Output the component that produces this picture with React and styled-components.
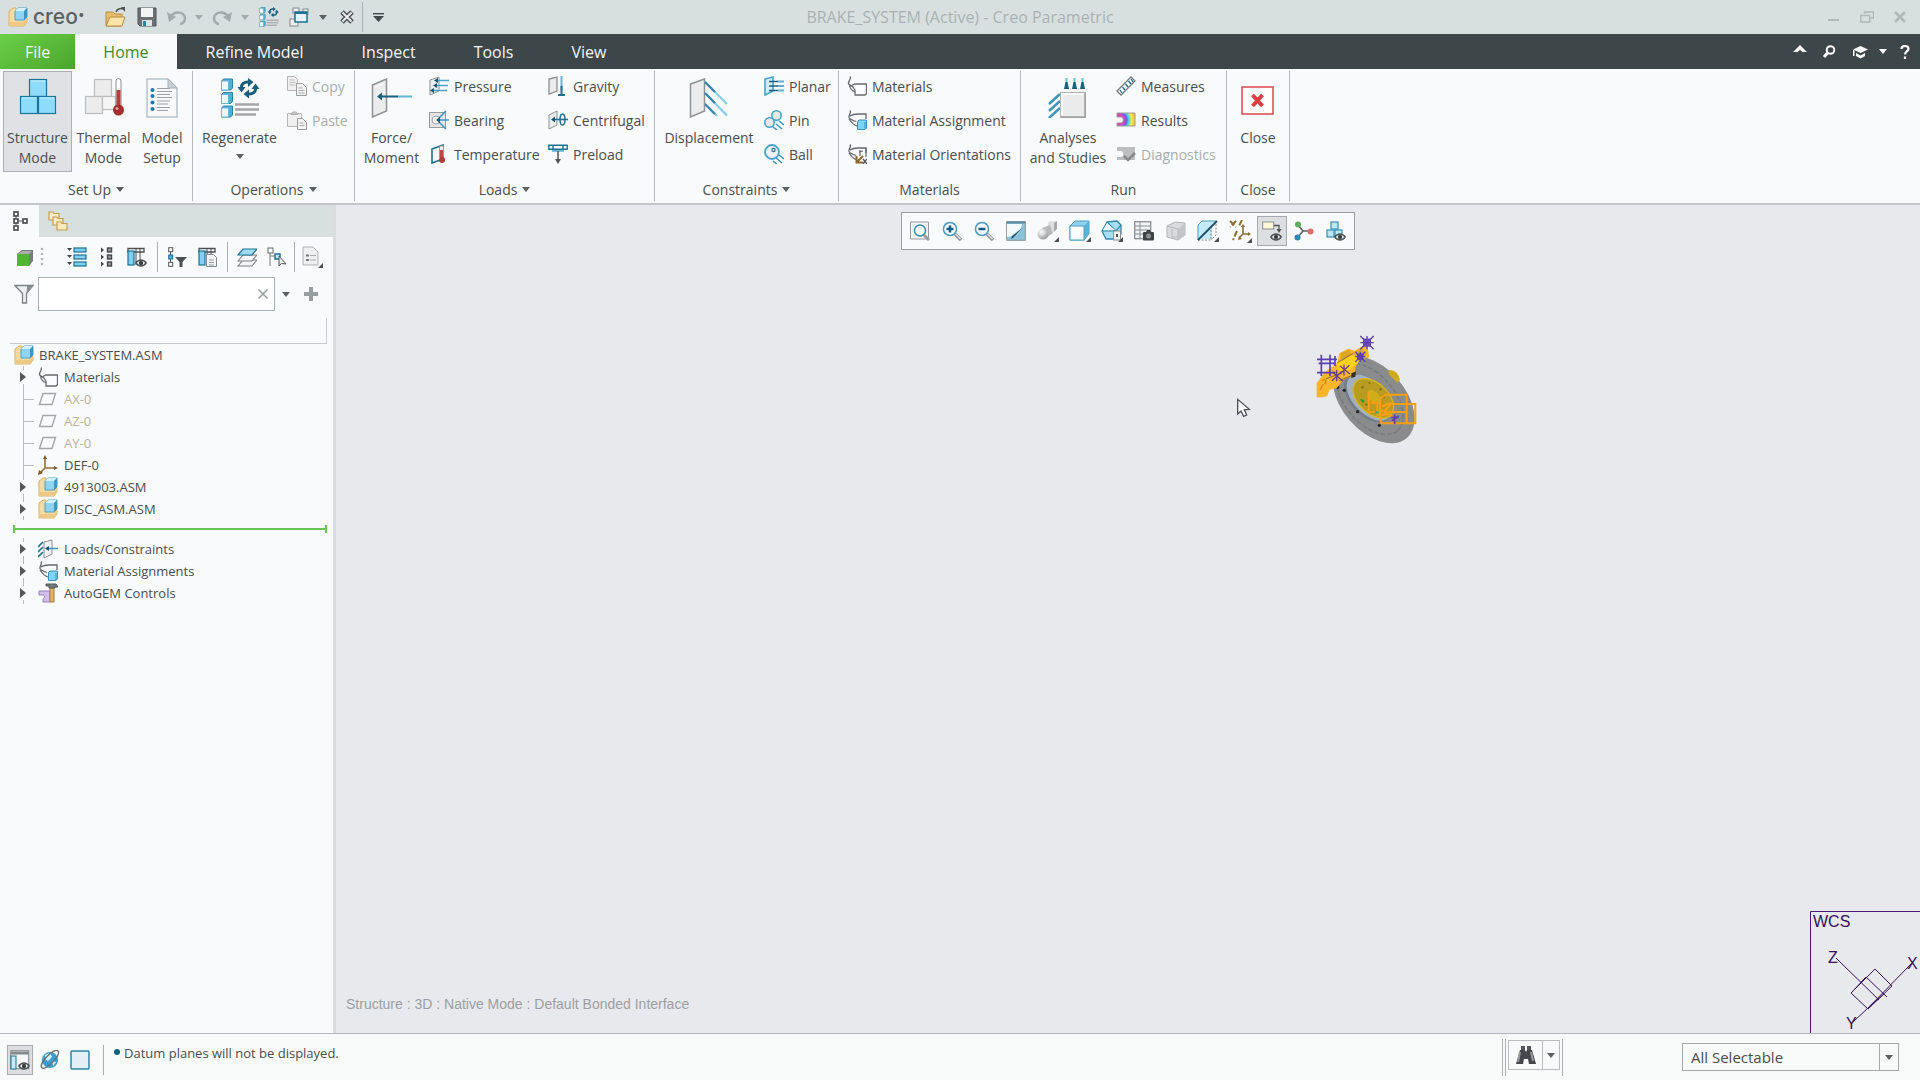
import React from 'react';
import styled, { createGlobalStyle, css } from 'styled-components';

const Global = createGlobalStyle`
  *, *::before, *::after { box-sizing: border-box; }
  html, body, #root { height: 100%; margin: 0; }
  body {
    font-family: "Open Sans", "Noto Sans", sans-serif;
    font-size: 14px;
    color: #4a4e50;
    background: #f8fafb;
    overflow: hidden;
  }
  button, input, select { font: inherit; color: inherit; }
`;

const bare = css`
  border: 0;
  padding: 0;
  margin: 0;
  background: none;
`;

/* ---------- frame ---------- */
const Shell = styled.div`
  display: flex;
  flex-direction: column;
  height: 100vh;
`;

const TitleBar = styled.header`
  display: grid;
  grid-template-columns: 1fr auto 1fr;
  align-items: center;
  height: 34px;
  flex: none;
  background: #d8e0df;
`;

const Title = styled.h1`
  margin: 0;
  font-size: 16px;
  font-weight: 400;
  color: #a9b2b2;
`;

const QuickBar = styled.div`
  display: flex;
  align-items: center;
  padding-left: 8px;
`;

const Brand = styled.span`
  display: flex;
  align-items: center;
  gap: 5px;
  width: 92px;
  font: 500 21px/24px Inter, sans-serif;
  color: #5a6062;
`;

const Mark = styled.sup`
  font-size: 5px;
  line-height: 8px;
  margin-left: -4px;
  align-self: flex-start;
  padding-top: 6px;
`;

const QuickButton = styled.button`
  ${bare}
  display: flex;
  align-items: center;
  justify-content: center;
  width: ${(p) => p.$w || 30}px;
  height: 30px;
`;

const Rule = styled.span`
  width: 1px;
  height: ${(p) => p.$h || 30}px;
  margin: 0 ${(p) => p.$m || 0}px ${(p) => p.$lift || 0}px;
  background: #a9afb2;
`;

const WindowButtons = styled.div`
  display: flex;
  justify-content: flex-end;
  padding-right: 4px;
`;

const WindowButton = styled(QuickButton)`
  width: 33px;
`;

/* ---------- tabs ---------- */
const TabBar = styled.nav`
  display: flex;
  flex: none;
  height: 35px;
  background: #3d4648;
`;

const Tab = styled.button`
  ${bare}
  padding: 0 29px;
  font-size: 16px;
  color: #f3f6f6;
  ${(p) => p.$kind === 'file' && css`
    padding: 0 25px;
    background: linear-gradient(150deg, #6bd048, #4aa52c);
  `}
  ${(p) => p.$kind === 'active' && css`
    padding: 0 28px;
    color: #3f8a2c;
    background: #f8fafb;
  `}
`;

const TabTools = styled.div`
  display: flex;
  align-items: center;
  margin-left: auto;
`;

/* ---------- ribbon ---------- */
const Ribbon = styled.section`
  display: flex;
  flex: none;
  height: 136px;
  padding: 2px 0 2px;
  background: #f8fafc;
  border-bottom: 2px solid #c3c7ca;
`;

const Group = styled.div`
  display: flex;
  flex-direction: column;
  width: ${(p) => p.$w}px;
  flex: none;
  border-right: 1px solid #b6bbbe;
`;

const GroupBody = styled.div`
  display: flex;
  gap: ${(p) => p.$gap ?? 5}px;
  height: 101px;
  padding-left: ${(p) => p.$pad || 4}px;
`;

const GroupName = styled.div`
  display: flex;
  justify-content: center;
  align-items: center;
  gap: 5px;
  flex: 1;
  padding-top: 5px;
`;

const BigButton = styled.button`
  ${bare}
  display: flex;
  flex-direction: column;
  align-items: center;
  width: ${(p) => p.$w}px;
  flex: none;
  padding-top: 6px;
  line-height: 20px;
  border: 1px solid ${(p) => (p.$on ? '#adb0b3' : 'transparent')};
  background: ${(p) => (p.$on ? '#dfe1e4' : 'none')};
  white-space: pre-line;
  svg:first-child { margin-bottom: 10px; }
`;

const SmallList = styled.div`
  display: flex;
  flex-direction: column;
  gap: 4px;
  width: ${(p) => (p.$w ? p.$w + 'px' : 'auto')};
  margin-right: ${(p) => (p.$w ? -5 : 0)}px;
`;

const SmallButton = styled.button`
  ${bare}
  display: flex;
  align-items: center;
  gap: 5px;
  height: 30px;
  white-space: nowrap;
  color: ${(p) => (p.disabled ? '#a9adaf' : 'inherit')};
`;

/* ---------- workspace ---------- */
const Work = styled.main`
  display: flex;
  flex: 1;
  min-height: 0;
`;

const Side = styled.aside`
  width: 336px;
  flex: none;
  border-right: 3px solid #d9dde0;
  background: #f8fafb;
`;

const SideTabs = styled.div`
  display: flex;
  height: 32px;
  background: #d8dfdf;
`;

const SideTab = styled.button`
  ${bare}
  display: flex;
  align-items: center;
  justify-content: center;
  width: 39px;
  padding-left: ${(p) => (p.$on ? 3 : 0)}px;
  background: ${(p) => (p.$on ? '#f8fafb' : 'none')};
`;

const SideTools = styled.div`
  display: flex;
  align-items: center;
  height: 40px;
  padding-left: 10px;
`;

const Grip = styled.span`
  display: flex;
  width: 22px;
`;

const FilterRow = styled.div`
  display: flex;
  align-items: center;
  height: 34px;
  padding-left: 14px;
  gap: 4px;
`;

const FilterBox = styled.div`
  display: flex;
  align-items: center;
  width: 237px;
  height: 34px;
  background: #fff;
  border: 1px solid #a7b3b7;
`;

const FilterInput = styled.input`
  ${bare}
  flex: 1;
  min-width: 0;
  height: 30px;
  padding: 0 6px;
  outline: 0;
`;

const TreeHead = styled.div`
  height: 26px;
  margin: 7px 6px 0 10px;
  border: solid #c6cacd;
  border-width: 0 1px 1px 0;
`;

const Tree = styled.ul`
  margin: 0;
  padding: 0;
  list-style: none;
  font-size: 13px;
`;

const TreeRow = styled.li`
  display: flex;
  align-items: center;
  height: 22px;
  gap: ${(p) => (p.$root ? 5 : 6)}px;
  padding-left: ${(p) => (p.$root ? 14 : 0)}px;
  color: ${(p) => (p.$muted ? '#bcb39d' : 'inherit')};
`;

const Toggle = styled.button`
  ${bare}
  display: flex;
  width: 38px;
  height: 22px;
  margin-right: -6px;
`;

const Insert = styled.div`
  height: 18px;
  margin: 0 6px 0 13px;
  display: flex;
  align-items: center;
  &::before, &::after {
    content: "";
    width: 2px;
    height: 8px;
    background: #6ac259;
  }
`;

const InsertLine = styled.span`
  flex: 1;
  height: 2px;
  background: #6ac259;
`;

const Canvas = styled.section`
  position: relative;
  flex: 1;
  display: flex;
  flex-direction: column;
  align-items: center;
  padding: 7px 0 0;
  background: #e8e9ed;
`;

const ViewBar = styled.div`
  display: flex;
  align-items: center;
  height: 38px;
  padding: 0 3px;
  gap: 2px;
  border: 1px solid #999ea3;
  background: #f8fafc;
`;

const ViewButton = styled.button`
  ${bare}
  display: flex;
  align-items: center;
  justify-content: center;
  width: 30px;
  height: 30px;
  border: 1px solid ${(p) => (p.$on ? '#a5a9ad' : 'transparent')};
  background: ${(p) => (p.$on ? '#dcdee1' : 'none')};
`;

const Placed = styled.svg`
  position: absolute;
  left: ${(p) => (p.$x == null ? 'auto' : p.$x + 'px')};
  right: ${(p) => (p.$x == null ? 0 : 'auto')};
  top: ${(p) => (p.$y == null ? 'auto' : p.$y + 'px')};
  bottom: ${(p) => (p.$y == null ? 0 : 'auto')};
`;

const ModelNote = styled.p`
  align-self: flex-start;
  margin: auto 0 19px 10px;
  font: 14px/20px "Liberation Sans", sans-serif;
  color: #9c9ea2;
`;

/* ---------- status bar ---------- */
const Status = styled.footer`
  display: flex;
  align-items: center;
  height: 47px;
  flex: none;
  padding: 6px 21px 0 7px;
  border-top: 1px solid #b2b7ba;
  background: #f8fafa;
`;

const StatusButton = styled.button`
  ${bare}
  display: flex;
  align-items: center;
  justify-content: center;
  width: ${(p) => (p.$on ? 26 : 30)}px;
  height: 30px;
  margin-right: ${(p) => (p.$on ? 2 : 0)}px;
  border: 1px solid ${(p) => (p.$on ? '#a9adb0' : 'transparent')};
  background: ${(p) => (p.$on ? '#dcdee1' : 'none')};
`;

const Message = styled.p`
  display: flex;
  gap: 4px;
  flex: 1;
  margin: 0 0 15px 2px;
  font-size: 13px;
  line-height: 18px;
  &::before {
    content: "";
    width: 6px;
    height: 6px;
    margin-top: 5px;
    border-radius: 50%;
    background: #14607f;
  }
`;

const FindBox = styled.div`
  display: flex;
  height: 30px;
  border: 1px solid #b9bdc0;
  margin: 0 2px 10px;
`;

const FindButton = styled(QuickButton)`
  height: 28px;
  border-left: ${(p) => (p.$split ? '1px solid #b9bdc0' : 0)};
`;

const Picker = styled.label`
  display: flex;
  align-items: center;
  width: 217px;
  height: 28px;
  margin-left: 119px;
  margin-bottom: 6px;
  border: 1px solid #a5a9ac;
`;

const PickerSelect = styled.select`
  ${bare}
  appearance: none;
  flex: 1;
  height: 26px;
  padding-left: 8px;
  font-size: 15px;
  outline: 0;
`;

const PickerArrow = styled.span`
  display: flex;
  align-items: center;
  justify-content: center;
  width: 19px;
  height: 26px;
  border-left: 1px solid #a5a9ac;
  pointer-events: none;
`;

/* ---------- drawings ---------- */
const I = ({ s = 20, h, v, children }) => (
  <svg width={s} height={h || s} viewBox={v || `0 0 ${s} ${h || s}`} fill="none" aria-hidden="true">{children}</svg>
);
const Arrow = ({ c = '#5b6063', w = 8 }) => (
  <I s={w} h={5} v="0 0 8 5"><path d="M0 0h8L4 5z" fill={c} /></I>
);

const Asm = () => (
  <I s={20}>
    <path d="M1 4l4-3h3v10h11v4l-3 4H1z" fill="#f6dba0" stroke="#d9b368" />
    <path d="M1 19h15l3-4v-4h-3v4H1z" fill="#eec985" />
    <path d="M7 4l3-3h9v9l-3 3H7z" fill="#8fd4f5" stroke="#4b9fc8" />
    <path d="M7 4l3-3h9l-3 3z" fill="#d3f0fd" /><path d="M16 4l3-3v9l-3 3z" fill="#3d97c4" />
  </I>
);
const cube = (x, y, w, f = '#8ddcfb', st = '#1c739c') => (
  <g key={`${x}-${y}`}><rect x={x} y={y} width={w} height={w} fill={f} stroke={st} strokeWidth="1.2" /></g>
);
const Structure = () => (
  <I s={40}>{cube(11.5, 1.5, 17)}{cube(2.5, 18.5, 17)}{cube(20.5, 18.5, 17)}
    <path d="M13 3h14M4 20h14M22 20h14" stroke="#c3effd" /></I>
);
const Thermal = () => (
  <I s={40}>
    {cube(10.5, 1.5, 17, '#ececec', '#bdbdbd')}{cube(1.5, 18.5, 17, '#ececec', '#bdbdbd')}{cube(18.5, 18.5, 13, '#f5f5f5', '#bdbdbd')}
    <rect x="32" y=".5" width="5" height="30" rx="2.5" fill="#fff" stroke="#8d8d8d" />
    <path d="M34.500 12v18" stroke="#b5403a" strokeWidth="4" /><circle cx="34.500" cy="32" r="5.500" fill="#a12f2b" /><circle cx="33" cy="30.500" r="1.500" fill="#e0a09c" />
  </I>
);
const Setup = () => (
  <I s={32} h={40}>
    <path d="M1 1h21l9 9v29H1z" fill="#f6f8fa" stroke="#b7c4cc" strokeWidth="1.500" /><path d="M22 1v9h9z" fill="#c9d0d5" stroke="#aab4ba" />
    {[12, 18, 24.5, 31].map((y) => <g key={y}><circle cx="6.500" cy={y} r="2" fill="#1f7ba3" /><path d={`M11 ${y - 1.5}h13M11 ${y + 1.5}h${y > 20 ? 11 : 15}`} stroke="#9aa0a4" /></g>)}
  </I>
);
const RefreshArrows = ({ t }) => (
  <g transform={t}>
    <path d="M3.500 8C3 4 6 1.500 11 2" stroke="#1a5f7e" strokeWidth="3" /><path d="M10-2l5.500 4L10 7z" fill="#1a5f7e" /><path d="M-.5 7h8l-4 5.500z" fill="#1a5f7e" />
    <path d="M17.500 8c.5 4-2.500 6.500-7.500 6" stroke="#1a5f7e" strokeWidth="3" /><path d="M11 18.500L5.500 14 11 9.500z" fill="#1a5f7e" /><path d="M13.500 9h8l-4-5.500z" fill="#1a5f7e" />
  </g>
);
const miniCube = (x, y, w) => (
  <g key={y}><path d={`M${x} ${y + 2}l2-2h${w}v${w}l-2 2H${x}z`} fill="#4fb0d8" stroke="#2b85ab" /><rect x={x} y={y + 2} width={w - 2} height={w} fill="#edf8fd" stroke="#69b7d6" /></g>
);
const Regen = ({ s = 40 }) => (
  <I s={s} v="0 0 40 40">
    {[1, 14.5, 28].map((y) => miniCube(1.5, y, 9))}
    <RefreshArrows t="translate(18 2)" />
    {[26, 31, 36].map((y, i) => <path key={y} d={`M15 ${y + 0.500}h${i === 2 ? 21 : 24}`} stroke="#a6a6a6" strokeWidth="2.500" />)}
  </I>
);
const Copy = () => (
  <I><path d="M.5.500h7l3 3v11H.500z" fill="#f0f0f0" stroke="#b5b5b5" /><path d="M2.500 4h5M2.500 6.500h6M2.500 9h6" stroke="#bbb" /><path d="M9.500 7.500h6l4 4v8h-10z" fill="#f4f4f4" stroke="#9c9c9c" /><path d="M11.500 12h4M11.500 14.500h6M11.500 17h6" stroke="#aaa" /></I>
);
const Paste = () => (
  <I><path d="M.5 3.500h14v13H.500z" fill="#f0f0f0" stroke="#b5b5b5" /><path d="M4 4.500C4 1 11 1 11 4.500z" fill="#c9c9c9" stroke="#aaa" /><path d="M10.500 8.500h5l4 4v7h-9z" fill="#f4f4f4" stroke="#9c9c9c" /><path d="M12.500 13h4M12.500 15.500h5" stroke="#aaa" /></I>
);
const Force = () => (
  <I s={42} h={40}><path d="M1.500 7l14-6v32l-14 6z" fill="#ececec" stroke="#8f9294" strokeWidth="1.500" /><path d="M4 9l9-4" stroke="#fff" />
    <path d="M9 18.500h18" stroke="#19617f" strokeWidth="2" /><path d="M27 18.500h14" stroke="#5fb8dc" strokeWidth="2" /><path d="M6 18.500l5-4v8z" fill="#19617f" /></I>
);
const blue = '#1f7095';
const Pressure = () => (
  <I><path d="M1 4l9-3v14l-9 4z" fill="#ececec" stroke="#8d9193" /><path d="M8 4.500h12M6 9.500h13M4 14.500h14" stroke="#4ba5cc" strokeWidth="1.500" /><path d="M5 4.500l4-2.500v5zM4 9.500l4-2.500v5zM1 14.500l4-2.500v5z" fill="#155775" /></I>
);
const Bearing = () => (
  <I><rect x=".5" y="2.500" width="16" height="15" fill="#e4e4e4" stroke="#999da0" /><circle cx="7" cy="10" r="4" fill="#fff" stroke="#a4a4a4" /><path d="M9 10h11M10 8l7-7M10 12l7 7" stroke="#3b9ac4" strokeWidth="1.600" /><path d="M7 10l4-3v6z" fill="#155775" /></I>
);
const Temperature = () => (
  <I><path d="M3 5l11-4v14L3 19z" fill="#f6f8f9" stroke="#1f6d90" strokeWidth="1.600" /><rect x="10.500" y="2" width="4" height="12" rx="1" fill="#eee" stroke="#999" /><path d="M12.500 6v9" stroke="#c0463f" strokeWidth="3" /><circle cx="13" cy="16" r="3" fill="#b43a34" /></I>
);
const Gravity = () => (
  <I><path d="M1 3l8-2v14l-8 3z" fill="#ececec" stroke="#8d9193" strokeWidth="1.300" /><path d="M13.500 0v14" stroke="#63b9dd" strokeWidth="2" /><path d="M13.500 10v9M10 19h7" stroke={blue} strokeWidth="2" /></I>
);
const Centrifugal = () => (
  <I><path d="M1 5l8-4v14l-8 4z" fill="#ececec" stroke="#8d9193" /><path d="M5 9.500h15" stroke={blue} strokeWidth="1.600" /><ellipse cx="14.500" cy="9.500" rx="2.500" ry="5.500" stroke={blue} strokeWidth="1.500" /><path d="M3 9.500l4-3v6z" fill="#155775" /></I>
);
const Preload = () => (
  <I><path d="M.8 1.200h18.400v4H.8zM5 .8v5h10v-5" fill="#eef8fc" stroke={blue} strokeWidth="1.400" /><path d="M4 7h12" stroke="#58b0d6" strokeWidth="1.500" /><path d="M10 7v9" stroke="#555" strokeWidth="1.500" /><path d="M7 15h6l-3 5z" fill="#555" /></I>
);
const Displacement = () => (
  <I s={40}><path d="M1.500 6l14-5v32l-14 6z" fill="#ececec" stroke="#8f9294" strokeWidth="1.500" />
    {[[4, 38, 26], [15, 38, 37.5], [26, 28, 38]].map(([y, x2, y2]) => <g key={y}><path d={`M16 ${y}L${x2} ${y2}`} stroke="#86cdea" strokeWidth="2.200" /><path d={`M16 ${y}l10 10`} stroke="#3b86a8" strokeWidth="2.200" /></g>)}</I>
);
const Planar = () => (
  <I><path d="M1 3l8-2v14l-8 4z" fill="#cfeefa" stroke="#46a4ce" strokeWidth="1.600" /><path d="M5 5.500h15M5 10h15M5 14.500h15" stroke="#1c5f7e" strokeWidth="1.300" /><path d="M14 5.500h6M14 10h6M14 14.500h6" stroke="#63bbdf" strokeWidth="1.300" /></I>
);
const hatch = <path d="M9 17l4 3M12 14l6 5M15 11l5 4" stroke="#3a93bd" strokeWidth="1.500" />;
const Pin = () => (
  <I><circle cx="12.500" cy="5.500" r="4.700" fill="#e8e8e8" stroke="#45a5d0" strokeWidth="1.600" />{hatch}<circle cx="5.500" cy="12.500" r="4.700" fill="#e8e8e8" stroke="#45a5d0" strokeWidth="1.600" /></I>
);
const Ball = () => (
  <I>{hatch}<circle cx="8" cy="8" r="7" fill="#eef0f1" stroke="#45a5d0" strokeWidth="1.800" /><circle cx="9.500" cy="6" r="1.600" fill="#fff" stroke={blue} strokeWidth="1.200" /></I>
);
const Materials = () => (
  <I><path d="M3 .5c2 2.500-2 4-1.500 7 .5 2.500 3.500 2 5.500 4M2.500 8c0 5 3 7 6 8" stroke="#65696c" strokeWidth="1.300" /><path d="M5 9.500l2.500-1.500h12v9.500l-1.500 1.500H8v-5z" fill="#fbfcfd" stroke="#65696c" strokeWidth="1.300" strokeLinejoin="round" /></I>
);
const tagSmall = <path d="M3 .5c2 2-2 5-1 7s4 3 7 4M3 6c3-2 5-2 8-2h8v5M2 9c2 3 5 6 8 7" fill="none" stroke="#65696c" strokeWidth="1.300" />;
const MatAssign = () => (
  <I>{tagSmall}<path d="M10.500 11.500l1.500-1.500h7.500v8l-1.500 1.500h-7.500z" fill="#7fd3f6" stroke="#3b96bd" /><path d="M18 12v7" stroke="#3b96bd" /></I>
);
const MatOrient = () => (
  <I>{tagSmall}<path d="M19 4v9M12 8l4-1M13 6v6" stroke="#65696c" strokeWidth="1.200" /><path d="M10 18l6-6M9.500 12v6.500H16" stroke="#8a6a2c" strokeWidth="2" /><path d="M16 15l4 5M20 15l-4 5" stroke="#555" strokeWidth="1.400" /></I>
);
const Analyses = () => (
  <I s={40}>
    {[0, 8, 16].map((x) => <g key={x}><path d={`M${18.5 + x} 0v9`} stroke="#6fbfe0" strokeWidth="2" /><path d={`M${17.5 + x} 4h2l1.500 7h-5z`} fill="#19617f" /></g>)}
    {[[16, 26], [23, 33], [30, 40]].map(([a, b]) => <path key={a} d={`M12 ${a}L1 ${b}`} stroke="#3d95bd" strokeWidth="2.500" />)}
    <rect x="12.500" y="14.500" width="25" height="25" fill="#ebebeb" stroke="#b4b4b4" /><path d="M13 39h24V15" stroke="#9d9d9d" strokeWidth="1.500" /><path d="M14 37V16h21" stroke="#fff" strokeWidth="2" />
  </I>
);
const Measures = () => (
  <I><path d="M1 15L15 1l4 4L5 19z" fill="#f7f9fa" stroke="#777c7f" strokeWidth="1.300" /><path d="M6 17l-2-3M9 14l-2.500-3M12 11L9.500 8M15 8l-2.500-3M17 6l-2-3" stroke={blue} strokeWidth="1.300" /></I>
);
const Results = () => (
  <I h={16}><defs><radialGradient id="spectrum" gradientUnits="userSpaceOnUse" cx="3" cy="8" r="17"><stop offset=".1" stopColor="#d33" /><stop offset=".3" stopColor="#e541c4" /><stop offset=".45" stopColor="#6a5ce8" /><stop offset=".58" stopColor="#49d4f0" /><stop offset=".75" stopColor="#f2ee3c" /><stop offset="1" stopColor="#f7a43a" /></radialGradient></defs>
    <path d="M1 1h18v13H1v-3h4c3 0 3-6 0-6H1z" fill="url(#spectrum)" stroke="#a39a9a" /></I>
);
const Diagnostics = () => <I h={16}><path d="M1 1h18v13H1v-3h4c3 0 3-6 0-6H1z" fill="#bcbebf" /><path d="M8 10l4 4 7-7" stroke="#858789" strokeWidth="2.500" /></I>;
const CloseBox = () => (
  <I s={34} h={40}><rect x="1" y="9" width="31" height="27" fill="#fff" stroke="#d9484b" strokeWidth="1.500" /><path d="M11.500 17l10 11M21.500 17l-10 11" stroke="#dc3f42" strokeWidth="4" /></I>
);
const Eye = ({ x, y }) => (
  <g transform={`translate(${x} ${y})`}><path d="M0 4C3-1 9-1 12 4 9 9 3 9 0 4z" fill="#4b5053" /><path d="M2 4c2-3 6-3 8 0-2 3-6 3-8 0z" fill="#f4f6f6" /><circle cx="6" cy="4" r="2.200" fill="#3b4043" /></g>
);

const Open = () => (
  <I s={21}><path d="M1 19V5h7l2 2h7v12z" fill="#e7bd6c" stroke="#b98b3d" /><path d="M1 19l4-9h15l-3 9z" fill="#fbe3ac" stroke="#b98b3d" /><path d="M11 5c1-3 4-4 7-3" stroke="#4b5053" strokeWidth="1.500" /><path d="M16 0h4v5z" fill="#4b5053" /></I>
);
const Save = () => (
  <I><path d="M1 1h18v18H3l-2-2z" fill="#6c7073" stroke="#515558" /><rect x="4" y="1" width="12" height="9" fill="#f3f5f5" /><rect x="5" y="13" width="10" height="6" fill="#d9e3e8" /><rect x="6" y="14" width="3" height="5" fill="#2a7fa8" /></I>
);
const Undo = ({ flip }) => (
  <I><g transform={flip ? 'translate(20 0) scale(-1 1)' : undefined}><path d="M4 10c3-6 13-6 14 1 0 3-2 6-5 6" stroke="#a4abac" strokeWidth="2.500" /><path d="M0 5l2 10 7-5z" fill="#a4abac" /></g></I>
);
const Windows = () => (
  <I><rect x="1" y="12" width="8" height="7" fill="#eee" stroke="#858a8d" /><rect x="4" y="1" width="6" height="5" fill="#eee" stroke="#858a8d" /><rect x="14" y="2" width="5" height="5" fill="#eee" stroke="#858a8d" /><rect x="6" y="5" width="12" height="10" fill="#e6f2f8" stroke="#1f7095" strokeWidth="1.500" /><path d="M6 6h12" stroke="#1f7095" strokeWidth="2" /></I>
);
const CloseX = () => <I s={14}><path d="M2 2l10 10M12 2L2 12" stroke="#4d5254" strokeWidth="5" /><path d="M2.500 2.500l9 9M11.500 2.500l-9 9" stroke="#e9eded" strokeWidth="2" /></I>;
const Customize = () => <I s={11} h={9}><path d="M0 .7h11" stroke="#44494c" strokeWidth="1.400" /><path d="M0 3h11L5.500 9z" fill="#44494c" /></I>;

const TreeTab = () => <I s={16} h={20}><path d="M3 4v12M3 10h8" stroke="#5a5f62" /><g fill="#fff" stroke="#44494c" strokeWidth="1.600"><rect x="1" y="1" width="4" height="4" /><rect x="1" y="8" width="4" height="4" /><rect x="1" y="15" width="4" height="4" /><rect x="10" y="8" width="4" height="4" /></g></I>;
const Folders = () => <I s={21}>{[[1, 1], [5, 6], [9, 11]].map(([x, y]) => <path key={x} d={`M${x} ${y + 8}V${y}h4l1 1.500h5v6.500z`} fill="#fdeac0" stroke="#c89d54" strokeWidth="1.200" />)}</I>;
const GreenCube = () => <I s={17} h={20}><path d="M0 7l5-4h11v11l-4 5H0z" fill="#777c7d" /><path d="M1 7l4-3h10l-3 3z" fill="#a9adae" /><rect x="0" y="7" width="12" height="12" fill="#54b435" /></I>;
const ListA = () => <I>{[1, 8, 15].map((y) => <g key={y}><path d={`M0 ${y}h5l-2.500 3z`} fill="#3e4346" /><rect x="7" y={y} width="12" height="4" fill="#7fd0f2" stroke={blue} strokeWidth="1.200" /></g>)}</I>;
const ListB = () => <I s={12} h={20}>{[1, 8, 15].map((y) => <g key={y}><path d={`M0 ${y - 0.500}v5l3-2.500z`} fill="#3e4346" /><rect x="6.500" y={y} width="4" height="4" fill="#999" stroke="#44494c" strokeWidth="1.400" /></g>)}</I>;
const columns = <><path d="M1 1.500h16v3.500H1z" fill="#fff" stroke="#4b5053" strokeWidth="1.300" /><path d="M9 2v16M13 2v14" stroke="#4b5053" /><rect x="1" y="4" width="6" height="14" fill="#7fd0f2" stroke={blue} strokeWidth="1.200" /></>;
const ColEye = () => <I>{columns}<Eye x={8} y={12} /></I>;
const Page = ({ x = 0, y = 0, s = 1 }) => <g transform={`translate(${x} ${y}) scale(${s})`}><path d="M.5.500h7l3 3v9H.500z" fill="#f2f4f5" stroke="#84898c" /><path d="M3 6h5M3 8.500h5M3 11h5" stroke="#84898c" strokeWidth=".8" /></g>;
const ColPage = () => <I>{columns}<Page x={8} y={7} /></I>;
const TreeFilter = () => <I><path d="M2.500 4v13" stroke="#555" /><rect x=".7" y=".7" width="4" height="4" fill="#fff" stroke="#555" /><rect x=".7" y="8" width="4" height="4" fill="#49b0df" stroke={blue} /><rect x=".7" y="15.300" width="4" height="4" fill="#fff" stroke="#555" /><path d="M7 10h12l-4.500 5v5h-3v-5z" fill="#4b5053" /></I>;
const Layers = () => <I>{[12, 7].map((y) => <path key={y} d={`M1 ${y + 7}l5-6h14l-5 6z`} fill="#f4f6f7" stroke="#7b8083" strokeWidth="1.100" />)}<path d="M1 8l5-6h14l-5 6z" fill="#9adcf6" stroke={blue} strokeWidth="1.200" /></I>;
const TreePick = () => <I><path d="M3 5v14M3 9h6" stroke="#777" /><rect x="1" y="1" width="5" height="5" fill="#fff" stroke="#666" /><rect x="8" y="7" width="5" height="5" fill="#c7ebfa" stroke={blue} strokeWidth="1.500" /><path d="M12 9v10l2.500-2.500L19 17z" fill="#e9ecec" stroke="#555" /></I>;
const PageMenu = () => <I s={22}><path d="M2 1h10l5 5v13H2z" fill="#eef0f1" stroke="#aeb3b6" /><path d="M5 9.500h3M5 14h3" stroke="#777" strokeWidth="2" /><path d="M9 9.500h6M9 14h6" stroke="#aaa" /><path d="M22 17v5h-5z" fill="#4b5053" /></I>;
const Funnel = () => <I><path d="M1 1.500h18l-6.500 8V19h-4V9.500z" fill="#eceeef" stroke="#7d8285" strokeWidth="1.300" /><path d="M13 2h6l-6.500 8z" fill="#8c9194" /></I>;
const Plus = () => <I s={14}><path d="M7 0v14M0 7h14" stroke="#989d9f" strokeWidth="4" /></I>;
const Plane = () => <I><path d="M5 4.500h12.500L14 15.500H1.500z" stroke="#a3a7aa" strokeWidth="1.400" /></I>;
const Csys = () => <I><path d="M7 2v11h11M7 13l-5 5" stroke="#94703a" strokeWidth="1.600" /><path d="M5 4l2-4 2 4zM16 11l4 2-4 2zM0 20l1-5 4 3z" fill="#7c5a26" /></I>;
const LoadsTree = () => <I><path d="M6 3l8-2v14l-8 4z" fill="#f0f1f2" stroke="#8d9193" /><path d="M5 3L0 8M5 8l-5 5M5 13l-5 5" stroke={blue} strokeWidth="1.600" /><path d="M8 9.500h12" stroke="#3b96bd" strokeWidth="1.500" /><path d="M7 9.500l4-2.500v5z" fill="#155775" /></I>;
const Gem = () => <I><path d="M1 8h11v11H5v-3c2-1 2-4 0-4H1z" fill="#d3c0ea" stroke="#9a7cc0" /><path d="M12 5h4v14h-4z" fill="#e2b368" stroke="#a57a35" /><path d="M8 1h10l2 3h-3v1h-6V3H8z" fill="#74787b" stroke="#55595c" /></I>;

const lens = (sign) => (
  <><path d="M13 13l6 6" stroke="#8b9093" strokeWidth="3.500" /><path d="M13.500 13l5 5" stroke="#e3e5e6" strokeWidth="1.500" /><circle cx="8" cy="8" r="6.500" fill="#f3fafd" stroke="#4a9ac0" strokeWidth="1.500" /><path d={sign} stroke="#155f85" strokeWidth="2.500" /></>
);
const corner = <path d="M22 17v5h-5z" fill="#4b5053" />;
const VIEW = [
  ['Refit', <I><path d="M.5 1h18v17H.500z" fill="#f4f6f7" stroke="#969b9e" /><path d="M13 13l6 6" stroke="#9a9fa2" strokeWidth="3" /><circle cx="10" cy="9.500" r="5.500" fill="#fff" stroke="#3b8fb7" strokeWidth="1.500" /></I>],
  ['Zoom in', <I>{lens('M4.500 8h7M8 4.500v7')}</I>],
  ['Zoom out', <I>{lens('M4.500 8h7')}</I>],
  ['Repaint', <I><rect x=".7" y=".7" width="18.600" height="18.600" fill="#8cc4dc" stroke="#8b9093" /><path d="M1 3h15c-1 7-6 13-15 13z" fill="#f3fafd" /><path d="M1 1.500h18" stroke="#5b8ba3" strokeWidth="2" /><path d="M16 7l-9 10-2 1 1-3z" fill="#1f5570" /></I>],
  ['Shading', <I s={22}><defs><radialGradient id="ball" cx=".35" cy=".3" r=".8"><stop offset="0" stopColor="#fff" /><stop offset="1" stopColor="#8f9192" /></radialGradient></defs><path d="M11 3l3-2h6v8l-3 3h-6z" fill="#a5a7a8" /><path d="M11 3l3-2h6l-3 2v9h-6z" fill="#dfe0e1" /><path d="M5 8l8-3 3 8-7 5z" fill="#b8babb" /><circle cx="6" cy="14" r="5.500" fill="url(#ball)" />{corner}</I>],
  ['Display style', <I s={22}><path d="M1 6l5-5h14v13l-5 6H1z" fill="#8fd3ee" stroke="#4a9fc4" /><path d="M15 6l5-5v13l-5 6z" fill="#5bb2d8" /><rect x="1" y="6" width="14" height="14" fill="#fff" stroke="#4a9fc4" />{corner}</I>],
  ['Saved views', <I s={22}><path d="M6 2l10-1 4 4v9l-5 5H5l-4-8z" fill="#a8dff3" stroke="#3289b0" strokeWidth="1.300" /><path d="M1 11h14M6 2v0l9 9M15 11v8M15 11l5-6" stroke="#3289b0" strokeWidth="1.200" /><path d="M6 3l8 7H2z" fill="#e9f7fc" /><rect x="12.500" y="11" width="7" height="9" fill="#f1f1f1" stroke="#8b9093" /><path d="M16 14v3" stroke="#555" strokeWidth="2" />{corner}</I>],
  ['View manager', <I><rect x=".7" y=".7" width="16" height="17" fill="#f1f2f3" stroke="#8b9093" strokeWidth="1.300" /><path d="M1 5h16M1 9h16M1 13h16M6 1v17" stroke="#8b9093" /><rect x="9" y="11" width="11" height="8.500" rx="1" fill="#3e4346" /><path d="M12 11l1-2h3l1 2z" fill="#3e4346" /><circle cx="14.500" cy="15" r="2.500" fill="#8b9093" /></I>],
  ['Perspective', <I><path d="M1 5l8-4 10 1v12l-7 5-11-3z" fill="#d9dbdc" stroke="#b3b6b8" /><path d="M12 8l7-6v12l-7 5z" fill="#c3c6c8" /><path d="M1 5l11 3v11M6 8v8l6 0" stroke="#b4b7b9" /></I>],
  ['Section', <I s={22}><path d="M1 5l4-4h14l-4 4v14H1z" fill="#c4eaf8" /><path d="M1 20V5l4-4h14" stroke="#4a9fc4" /><path d="M1 20h13V7l5-5v13l-5 5" stroke="#888" strokeDasharray="2 1.500" /><path d="M1 20L20 1" stroke="#1c4f6c" strokeWidth="1.800" />{corner}</I>],
  ['Datum filters', <I s={23}><path d="M1 1l6 6M7 1L1 7M13 0l-3 6M8 11l-4 9" stroke="#8a6d35" strokeWidth="2" strokeDasharray="6 2" /><path d="M14 6v8h6M14 14l-4 4" stroke="#8a6d35" strokeWidth="1.600" /><path d="M12 7l2-3 2 3zM19 12l3 2-3 2zM9 20l1-4 3 3z" fill="#8a6d35" /><path d="M23 18v5h-5z" fill="#4b5053" /></I>],
  ['Annotations', <I><rect x=".7" y="1" width="11" height="7" fill="#fdf7d9" stroke="#8b9093" /><path d="M12 4.500h5v5" stroke="#555" strokeWidth="1.300" /><path d="M14.500 8h5l-2.500 4z" fill="#555" /><Eye x={8} y={12} /></I>, true],
  ['Spin centre', <I><path d="M4 4l5 6-5 6M9 10h8" stroke="#5b6063" strokeWidth="1.600" /><circle cx="4" cy="3.500" r="3" fill="#5fae5c" /><circle cx="3.500" cy="16.500" r="3" fill="#2f87b5" /><circle cx="16.500" cy="10.500" r="3" fill="#dd6e67" /></I>],
  ['Simulation display', <I>{cube(5, 1, 7, '#bfe6f4', '#3b8fb7')}{cube(1, 9, 7, '#bfe6f4', '#3b8fb7')}{cube(9, 9, 7, '#bfe6f4', '#3b8fb7')}<Eye x={8} y={12} /></I>],
];

const Burst = ({ x, y, r = 18 }) => (
  <g transform={`translate(${x} ${y})`} stroke="#5b3fae" strokeWidth="4">
    <path d={`M${-r} 0H${r}M0 ${-r}V${r}M${-r} ${-r}L${r} ${r}M${r} ${-r}L${-r} ${r}`} /><rect x={-r / 2} y={-r / 2} width={r} height={r} fill="#5b3fae" fillOpacity=".5" />
  </g>
);
const Model = () => (
  <Placed $x={884} $y={105} width="220" height="150" viewBox="0 0 660 450" fill="none" aria-label="Brake disc assembly">
    <g transform="rotate(49 461 269)">
      <ellipse cx="461" cy="269" rx="152" ry="95" fill="#8a8b8c" />
      <ellipse cx="452" cy="276" rx="126" ry="73" stroke="#77797b" strokeWidth="4" strokeDasharray="14 6" />
    </g>
    <g transform="rotate(46 447 262)">
      <ellipse cx="446" cy="266" rx="88" ry="52" fill="#747d89" />
      <ellipse cx="448" cy="262" rx="84" ry="48" fill="#a3b0c0" />
    </g>
    <path d="M506 180q26-3 34 30l-8 8-26-26z" fill="#cfab1b" />
    <g transform="rotate(43 460 265)"><ellipse cx="460" cy="265" rx="72" ry="45" fill="#b89b20" stroke="#d5b71d" strokeWidth="4" /><ellipse cx="458" cy="260" rx="24" ry="15" fill="#cfae1a" /></g>
    <g fill="#8a7519"><circle cx="428" cy="232" r="4" /><circle cx="448" cy="219" r="3" /><circle cx="482" cy="238" r="4" /><circle cx="492" cy="262" r="3" /><circle cx="440" cy="284" r="4" /></g>
    <g fill="#26282a"><circle cx="373" cy="241" r="5" /><circle cx="413" cy="305" r="5" /><circle cx="478" cy="346" r="5" /><circle cx="353" cy="232" r="5" /></g>
    <path d="M290 262v-42l22-32 40-30 6-28 26-14 20 6 20-12 18-2 6 34-30 8-12 22v22l-36 16-20 24-22 6-6 18-12 4z" fill="#f6b52b" />
    <path d="M352 158l34-22 30 2-2 22-36 26-22-4z" fill="#fdd019" /><path d="M362 130l24-10 8 12-28 22z" fill="#dda523" /><path d="M400 128l24-12 14 14-8 18-18-2z" fill="#d6a73e" />
    <path d="M352 158l48-28M318 206l40-14M358 212l44-18" stroke="#8b6b35" strokeWidth="3" /><path d="M394 190l14-6-2 16-12 4z" fill="#36302a" />
    <path d="M306 212c8-8 16 0 8 10M300 240l10-18" stroke="#d18d18" strokeWidth="4" />
    <path d="M304 134v64M330 134v64M291 148h60M291 188h56M296 160h50M345 138v30" stroke="#5b3fae" strokeWidth="5" />
    <Burst x={441} y={98} r={20} /><Burst x={421} y={140} r={15} />
    <path d="M338 186l30 28M366 184l-30 28M350 180v34M360 168l30 24M388 166l-28 26M372 164v32" stroke="#6a3d8d" strokeWidth="4" />
    <path d="M482 264l16-10h62v52h-72M486 290l16-8h84v58H484l-4-24V264M446 246v60h40M452 278h20v36h30M560 306v34M490 308l24-28M482 300l40 22" stroke="#fb9d10" strokeWidth="6" />
    <path d="M422 268l10 8M426 276l6-4" stroke="#239a35" strokeWidth="5" /><path d="M466 306l10 2" stroke="#28a58a" strokeWidth="6" />
    <path d="M514 322h22M524 314v28M516 332l20-14" stroke="#5b3fae" strokeWidth="5" />
    <path d="M53 268v44l10-9 8 16 9-4-7-16 15-1z" fill="#fff" stroke="#4b4e52" strokeWidth="4" />
  </Placed>
);
const Wcs = () => (
  <Placed width="110" height="122" viewBox="0 0 110 122" fill="none" stroke="#36105e" aria-label="World coordinate system">
    <path d="M110 .5H.500V122" stroke="#4b1a78" />
    <path d="M26 47L69 89M102 52L58 97M43 111L58 97M41 82L65 58l17 17-24 23zM51 71l5-5 21 20M43 80l12-13M58 97l16-14" />
    <g fill="#36105e" stroke="none" fontFamily="Liberation Sans, sans-serif" fontSize="16">
      <text x="3" y="16">WCS</text><text x="18" y="52">Z</text><text x="97" y="58">X</text><text x="36" y="118">Y</text>
    </g>
  </Placed>
);

/* ---------- data ---------- */
const GROUPS = [
  { name: 'Set Up', menu: true, w: 193, gap: 0, big: [['Structure\nMode', <Structure />, 69, true], ['Thermal\nMode', <Thermal />, 63], ['Model\nSetup', <Setup />, 54]] },
  { name: 'Operations', menu: true, w: 162, big: [['Regenerate', <Regen />, 85, false, true]], lists: [{ items: [['Copy', <Copy />, true], ['Paste', <Paste />, true]] }] },
  { name: 'Loads', menu: true, w: 300, big: [['Force/\nMoment', <Force />, 65]], lists: [
    { w: 119, items: [['Pressure', <Pressure />], ['Bearing', <Bearing />], ['Temperature', <Temperature />]] },
    { items: [['Gravity', <Gravity />], ['Centrifugal', <Centrifugal />], ['Preload', <Preload />]] }] },
  { name: 'Constraints', menu: true, w: 184, big: [['Displacement', <Displacement />, 100]], lists: [{ items: [['Planar', <Planar />], ['Pin', <Pin />], ['Ball', <Ball />]] }] },
  { name: 'Materials', w: 182, pad: 8, lists: [{ items: [['Materials', <Materials />], ['Material Assignment', <MatAssign />], ['Material Orientations', <MatOrient />]] }] },
  { name: 'Run', w: 206, big: [['Analyses\nand Studies', <Analyses />, 86]], lists: [{ items: [['Measures', <Measures />], ['Results', <Results />], ['Diagnostics', <Diagnostics />, true]] }] },
  { name: 'Close', w: 63, big: [['Close', <CloseBox />, 54]] },
];

const TREE = [
  { label: 'Materials', icon: <Materials />, open: true },
  { label: 'AX-0', icon: <Plane />, muted: true },
  { label: 'AZ-0', icon: <Plane />, muted: true },
  { label: 'AY-0', icon: <Plane />, muted: true },
  { label: 'DEF-0', icon: <Csys /> },
  { label: '4913003.ASM', icon: <Asm />, open: true },
  { label: 'DISC_ASM.ASM', icon: <Asm />, open: true },
];
const SIM = [
  { label: 'Loads/Constraints', icon: <LoadsTree />, open: true },
  { label: 'Material Assignments', icon: <MatAssign />, open: true },
  { label: 'AutoGEM Controls', icon: <Gem />, open: true },
];

const Row = ({ label, icon, open, muted }) => (
  <TreeRow $muted={muted}>
    <Toggle as={open ? 'button' : 'span'} aria-label={open ? `Expand ${label}` : undefined}>
      <I s={38} h={22}>
        {open
          ? <><path d="M23.500 0v4M23.500 18v4" stroke="#b9bdbf" /><path d="M20 6v10l6-5z" fill="#55595c" /></>
          : <path d="M23.500 0v22M23.500 11.500H34" stroke="#b9bdbf" />}
      </I>
    </Toggle>
    {icon}<span>{label}</span>
  </TreeRow>
);

const SideTool = ({ label, children }) => <ViewButton aria-label={label}>{children}</ViewButton>;

export default function App() {
  return (
    <Shell>
      <Global />
      <TitleBar>
        <QuickBar>
          <Brand><Asm /><span>creo</span><Mark>●</Mark></Brand>
          <QuickButton aria-label="Open"><Open /></QuickButton>
          <QuickButton aria-label="Save" $w={34}><Save /></QuickButton>
          <QuickButton aria-label="Undo" $w={26}><Undo /></QuickButton>
          <QuickButton aria-label="Undo list" $w={18}><Arrow c="#a4abac" /></QuickButton>
          <QuickButton aria-label="Redo" $w={28}><Undo flip /></QuickButton>
          <QuickButton aria-label="Redo list" $w={18}><Arrow c="#a4abac" /></QuickButton>
          <QuickButton aria-label="Regenerate"><Regen s={20} /></QuickButton>
          <QuickButton aria-label="Windows"><Windows /></QuickButton>
          <QuickButton aria-label="Window list" $w={18}><Arrow /></QuickButton>
          <QuickButton aria-label="Close window" $w={30}><CloseX /></QuickButton>
          <Rule $h={30} />
          <QuickButton aria-label="Customize toolbar"><Customize /></QuickButton>
        </QuickBar>
        <Title>BRAKE_SYSTEM (Active) - Creo Parametric</Title>
        <WindowButtons>
          <WindowButton aria-label="Minimize"><I s={12}><path d="M0 9h11" stroke="#b0b8b8" strokeWidth="2" /></I></WindowButton>
          <WindowButton aria-label="Restore"><I s={14} h={12}><path d="M4.500 3V1h9v6h-3M.700 4.500h9v6.500h-9z" stroke="#b0b8b8" strokeWidth="1.400" /></I></WindowButton>
          <WindowButton aria-label="Close"><I s={12}><path d="M1 1l10 10M11 1L1 11" stroke="#b0b8b8" strokeWidth="2.500" /></I></WindowButton>
        </WindowButtons>
      </TitleBar>

      <TabBar>
        <Tab $kind="file">File</Tab>
        <Tab $kind="active">Home</Tab>
        {['Refine Model', 'Inspect', 'Tools', 'View'].map((t) => <Tab key={t}>{t}</Tab>)}
        <TabTools>
          <QuickButton $w={28} aria-label="Collapse ribbon"><I s={14} h={16}><path d="M0 8l7-7 7 7H9.500L7 6 4.500 8z" fill="#fff" /></I></QuickButton>
          <QuickButton $w={30} aria-label="Search"><I s={14} h={14}><circle cx="8.500" cy="5" r="3.800" stroke="#fff" strokeWidth="2" /><path d="M5.500 8L2 12" stroke="#fff" strokeWidth="3" /></I></QuickButton>
          <QuickButton $w={32} aria-label="Learning"><I s={15} h={14}><path d="M0 4.500L7.500 1 15 4.500 7.500 8z" fill="#fff" /><path d="M3 8l4.500 2.500L12 8v3l-4.500 2.500L3 11zM0 5h1.500v6H0z" fill="#fff" /></I></QuickButton>
          <QuickButton $w={14} aria-label="Learning list"><Arrow c="#fff" /></QuickButton>
          <QuickButton $w={30} aria-label="Help"><I s={10} h={14}><path d="M1.500 4c0-4 7-4 7 0 0 2-3.500 2.500-3.500 5.500M5 11.500V14" stroke="#fff" strokeWidth="2.200" /></I></QuickButton>
        </TabTools>
      </TabBar>

      <Ribbon>
        {GROUPS.map((g) => (
          <Group key={g.name} $w={g.w}>
            <GroupBody $pad={g.pad || (g.gap === 0 ? 3 : 4)} $gap={g.gap}>
              {(g.big || []).map(([label, icon, w, on, menu]) => (
                <BigButton key={label} $w={w} $on={on}>{icon}{label}{menu && <I s={8} h={20}><path d="M0 6h8L4 11z" fill="#5b6063" /></I>}</BigButton>
              ))}
              {(g.lists || []).map((l, i) => (
                <SmallList key={i} $w={l.w}>
                  {l.items.map(([label, icon, off]) => <SmallButton key={label} disabled={off}>{icon}{label}</SmallButton>)}
                </SmallList>
              ))}
            </GroupBody>
            <GroupName>{g.name}{g.menu && <Arrow />}</GroupName>
          </Group>
        ))}
      </Ribbon>

      <Work>
        <Side>
          <SideTabs>
            <SideTab $on aria-label="Model tree"><TreeTab /></SideTab>
            <SideTab aria-label="Folders"><Folders /></SideTab>
          </SideTabs>
          <SideTools>
            <SideTool label="Model"><GreenCube /></SideTool>
            <Grip><I s={4} h={20}>{[2, 7, 12, 17].map((y) => <circle key={y} cx="2" cy={y} r="1.300" fill="#b1b5b7" />)}</I></Grip>
            <SideTool label="Expand all"><ListA /></SideTool>
            <SideTool label="Collapse all"><ListB /></SideTool>
            <SideTool label="Show columns"><ColEye /></SideTool>
            <Rule $m={5} />
            <SideTool label="Tree filters"><TreeFilter /></SideTool>
            <SideTool label="Tree columns"><ColPage /></SideTool>
            <Rule $m={4} />
            <SideTool label="Layers"><Layers /></SideTool>
            <SideTool label="Select in tree"><TreePick /></SideTool>
            <Rule $h={0} $m={2} />
            <SideTool label="Tree settings"><PageMenu /></SideTool>
          </SideTools>
          <FilterRow>
            <Funnel />
            <FilterBox>
              <FilterInput type="text" aria-label="Filter tree" />
              <QuickButton $w={22} aria-label="Clear filter"><I s={10}><path d="M.500.500l9 9M9.500.500l-9 9" stroke="#999ea0" strokeWidth="1.500" /></I></QuickButton>
            </FilterBox>
            <QuickButton $w={14} aria-label="Filter options"><Arrow /></QuickButton>
            <QuickButton $w={28} aria-label="Add filter"><Plus /></QuickButton>
          </FilterRow>
          <TreeHead />
          <Tree>
            <TreeRow $root><Asm /><span>BRAKE_SYSTEM.ASM</span></TreeRow>
            {TREE.map((r) => <Row key={r.label} {...r} />)}
          </Tree>
          <Insert><InsertLine /></Insert>
          <Tree>{SIM.map((r) => <Row key={r.label} {...r} />)}</Tree>
        </Side>
        <Canvas>
          <ViewBar>{VIEW.map(([label, icon, on]) => <ViewButton key={label} aria-label={label} $on={on}>{icon}</ViewButton>)}</ViewBar>
          <ModelNote>Structure : 3D : Native Mode : Default Bonded Interface</ModelNote>
          <Model />
          <Wcs />
        </Canvas>
      </Work>

      <Status>
        <StatusButton $on aria-label="Navigator"><I><rect x=".7" y=".7" width="18" height="18" fill="#f4f6f7" stroke="#84898c" /><path d="M1 3h18" stroke="#84898c" strokeWidth="3" /><rect x="1" y="6" width="5" height="13" fill="#c7ebfa" stroke={blue} /><Eye x={8} y={12} /></I></StatusButton>
        <StatusButton aria-label="Browser"><I><circle cx="10" cy="10" r="8" fill="#3b9fd0" /><path d="M5 5l5-2 2 4-4 4-3-2zM12 11l4 1-3 4z" fill="#d5f0fb" /><path d="M2 18C-2 14 14-3 18 1c3 4-11 19-16 17z" stroke="#6a7073" strokeWidth="1.300" /></I></StatusButton>
        <StatusButton aria-label="Full screen"><I><rect x="1" y="1" width="18" height="18" rx="1" fill="#e3eef5" stroke="#2f86b0" strokeWidth="1.500" /></I></StatusButton>
        <Rule $m={8} />
        <Message>Datum planes will not be displayed.</Message>
        <Rule $h={37} $m={2} $lift={6} />
        <Rule $h={37} $lift={6} />
        <FindBox>
          <FindButton $w={33} aria-label="Find"><I><path d="M5 1h4v5H5zM11 1h4v5h-4z" fill="#55595c" /><path d="M4 5h5l1 2 1-2h5l4 14h-7l-1-5h-4l-1 5H0z" fill="#44484b" /><path d="M4 7L2 17M15 7l2 9" stroke="#999" strokeWidth="2" /></I></FindButton>
          <FindButton $w={17} $split aria-label="Find options"><Arrow /></FindButton>
        </FindBox>
        <Rule $h={37} $lift={6} />
        <Picker>
          <PickerSelect aria-label="Selection filter" defaultValue="all"><option value="all">All Selectable</option></PickerSelect>
          <PickerArrow><Arrow /></PickerArrow>
        </Picker>
      </Status>
    </Shell>
  );
}
